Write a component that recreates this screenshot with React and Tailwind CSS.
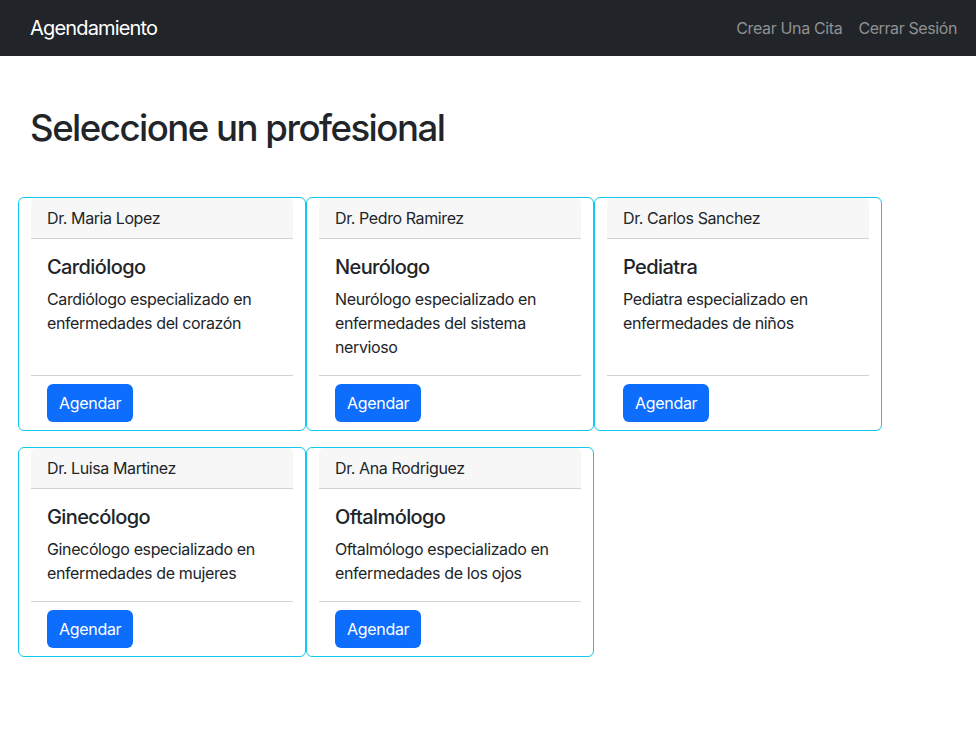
import React from "react";

const doctors = [
  { name: "Dr. Maria Lopez", spec: "Cardiólogo", desc: "Cardiólogo especializado en enfermedades del corazón" },
  { name: "Dr. Pedro Ramirez", spec: "Neurólogo", desc: "Neurólogo especializado en enfermedades del sistema nervioso" },
  { name: "Dr. Carlos Sanchez", spec: "Pediatra", desc: "Pediatra especializado en enfermedades de niños" },
  { name: "Dr. Luisa Martinez", spec: "Ginecólogo", desc: "Ginecólogo especializado en enfermedades de mujeres" },
  { name: "Dr. Ana Rodriguez", spec: "Oftalmólogo", desc: "Oftalmólogo especializado en enfermedades de los ojos" },
];

function Card({ d }) {
  return (
    <div className="flex flex-col border border-[#0dcaf0] rounded-[6px] px-3">
      <div className="h-[41px] px-4 flex items-center bg-[#f7f7f7] border-b border-[#d3d3d4] rounded-t-[5px] text-[16px] tracking-[-0.4px] text-[#212529]">
        {d.name}
      </div>
      <div className="flex-1 p-4">
        <h5 className="text-[20px] leading-[24px] font-medium tracking-[-0.6px] text-[#212529] mb-2">{d.spec}</h5>
        <p className="text-[16px] leading-[24px] tracking-[-0.37px] text-[#212529]">{d.desc}</p>
      </div>
      <div className="border-t border-[#d3d3d4] px-4 py-2">
        <button className="h-[38px] px-3 rounded-[6px] bg-[#0d6efd] text-white text-[16px] leading-[24px] tracking-[-0.3px]">
          Agendar
        </button>
      </div>
    </div>
  );
}

export default function App() {
  return (
    <div className="min-h-[734px] bg-white" style={{ fontFamily: "Inter, 'Noto Sans', sans-serif" }}>
      <nav className="h-[56px] bg-[#212529] flex items-center justify-between pl-[30px] pr-[11px]">
        <span className="text-[20px] tracking-[-0.83px] text-white">Agendamiento</span>
        <div className="flex">
          <a className="px-2 text-[16px] tracking-[-0.35px] text-[#8f9193]">Crear Una Cita</a>
          <a className="px-2 text-[16px] tracking-[-0.4px] text-[#8f9193]">Cerrar Sesión</a>
        </div>
      </nav>
      <div className="pl-[18px]">
        <h1 className="pl-3 mt-[50px] text-[36.6px] leading-[44px] font-medium tracking-[-1.5px] text-[#212529]">
          Seleccione un profesional
        </h1>
        <div className="mt-[47px] grid grid-cols-[288px_288px_288px] gap-y-4">
          {doctors.map((d) => (
            <Card key={d.name} d={d} />
          ))}
        </div>
      </div>
    </div>
  );
}
